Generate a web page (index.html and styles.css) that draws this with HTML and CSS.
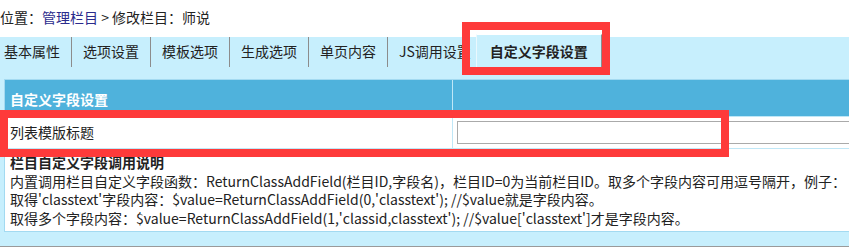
FILE: index.html
```html
<!DOCTYPE html>
<html lang="zh-CN">
<head>
    <meta charset="UTF-8">
    <title>修改栏目</title>
    <link rel="stylesheet" href="styles.css">
</head>
<body>
    <div class="crumb">位置：<a href="#">管理栏目</a>&nbsp;&gt;&nbsp;修改栏目：师说</div>
    <div class="main">
        <div class="tabs">
            <div class="tab">基本属性</div>
            <div class="tab">选项设置</div>
            <div class="tab">模板选项</div>
            <div class="tab">生成选项</div>
            <div class="tab">单页内容</div>
            <div class="tab">JS调用设置</div>
            <div class="tab active">自定义字段设置</div>
        </div>
        <div class="panel">
            <div class="cell head">自定义字段设置</div>
            <div class="cell head"></div>
            <div class="cell">列表模版标题</div>
            <div class="cell field"><input type="text" class="input"></div>
            <div class="cell note">
                <b>栏目自定义字段调用说明</b><br>
                内置调用栏目自定义字段函数：ReturnClassAddField(栏目ID,字段名)，栏目ID=0为当前栏目ID。取多个字段内容可用逗号隔开，例子：<br>
                取得'classtext'字段内容：$value=ReturnClassAddField(0,'classtext'); //$value就是字段内容。<br>
                取得多个字段内容：$value=ReturnClassAddField(1,'classid,classtext'); //$value['classtext']才是字段内容。
            </div>
        </div>
    </div>
    <div class="mark mark-tab"></div>
    <div class="mark mark-row"></div>
</body>
</html>
```

FILE: styles.css
```css
body {
    margin: 0;
    font-family: "Noto Sans CJK SC", sans-serif;
    font-size: 14px;
    color: #222;
    background: #fff;
    overflow: hidden;
    position: relative;
    height: 247px;
}
.crumb {
    height: 37px;
    line-height: 18px;
    padding-top: 8px;
    box-sizing: border-box;
}
.crumb a {
    color: #2b2b8c;
    text-decoration: none;
}
.main {
    background: #c7effd;
    height: 210px;
    box-sizing: border-box;
    border-bottom: 1px solid #9a9a9a;
}
.tabs {
    display: flex;
    height: 30px;
    margin-left: -7px;
}
.tab {
    padding: 0 11px;
    line-height: 29px;
    border-right: 1px solid #8c8c8c;
    white-space: nowrap;
}
.tab.active {
    margin-top: -3px;
    margin-left: -7px;
    height: 33px;
    line-height: 32px;
    padding: 0 13px;
    font-weight: bold;
    background: #c9f0fd;
    border-top: 1px solid #fff;
    border-left: 1px solid #eaf8fe;
    border-right: 1px solid #8c8c8c;
    box-sizing: border-box;
}
.panel {
    margin: 12px 0 0 4px;
    width: 900px;
    display: grid;
    grid-template-columns: 447px 1fr;
    gap: 1px;
    background: #bfe7f7;
    border: 1px solid #a3daf1;
}
.cell {
    background: #fff;
    padding: 0 5px;
    height: 31px;
    line-height: 31px;
}
.cell.head {
    background: #4fb2dc;
    color: #fff;
    font-weight: bold;
    height: 36px;
    line-height: 38px;
}
.cell.field {
    padding: 4px 4px 0;
    box-sizing: border-box;
}
.input {
    display: block;
    width: 500px;
    height: 23px;
    box-sizing: border-box;
    border: 1px solid #aaa;
    margin: 0;
}
.note {
    grid-column: 1 / 3;
    height: 82px;
    line-height: 18.5px;
    padding-top: 4px;
    box-sizing: border-box;
    white-space: nowrap;
}
.mark {
    position: absolute;
    border: 8px solid #fe3a3a;
    box-sizing: border-box;
}
.mark-tab {
    left: 462px;
    top: 22px;
    width: 148px;
    height: 53px;
}
.mark-row {
    left: 0;
    top: 110px;
    width: 729px;
    height: 47px;
}
```
